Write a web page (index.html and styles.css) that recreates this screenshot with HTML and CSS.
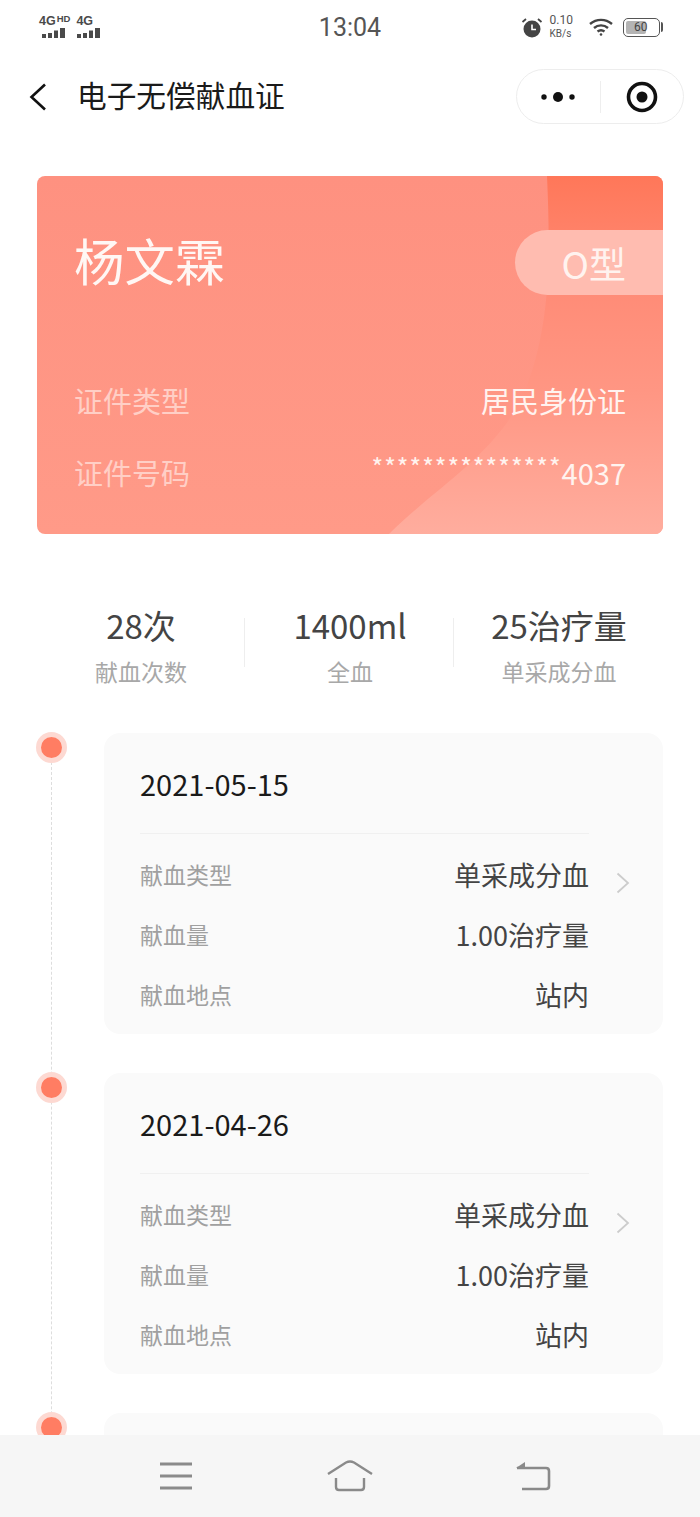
FILE: index.html
```html
<!DOCTYPE html>
<html lang="zh-CN">
  <head>
    <meta charset="UTF-8" />
    <meta name="viewport" content="width=device-width, initial-scale=1.0" />
    <title>电子无偿献血证</title>
    <link rel="stylesheet" href="styles.css">
  </head>
  <body>
    <div class="phone">
      <div class="status-bar">
        <div class="signals">
          <div class="signal">
            <span class="signal-text">4G<sup>HD</sup></span>
            <svg width="26" height="10" viewBox="0 0 26 10"><path d="M0 6h4v4H0zM6 5h4v5H6zM12 2.500h4v7.500h-4zM18 0h5v10h-5z" fill="#4a4a4a"/></svg>
          </div>
          <div class="signal signal-two">
            <span class="signal-text">4G</span>
            <svg width="24" height="10" viewBox="0 0 24 10"><path d="M0 6h4v4H0zM6 5h4v5H6zM12 2.500h4v7.500h-4zM18 0h5v10h-5z" fill="#4a4a4a"/></svg>
          </div>
        </div>
        <div class="clock">13:04</div>
        <div class="status-right">
          <svg class="alarm" width="22" height="21" viewBox="0 0 22 21">
            <circle cx="11" cy="12" r="8.500" fill="#444"/>
            <path d="M11 7.500v5h4" fill="none" stroke="#fff" stroke-width="1.600"/>
            <path d="M1.500 5l3.500-3M20.500 5l-3.500-3" stroke="#444" stroke-width="1.800"/>
          </svg>
          <div class="speed"><span>0.10</span><span class="speed-unit">KB/s</span></div>
          <svg class="wifi" width="24" height="18" viewBox="0 0 24 18" fill="none" stroke="#444" stroke-width="2.400">
            <path d="M1 6c6.500-5.500 15.500-5.500 22 0"/>
            <path d="M5 10c4-3.500 10-3.500 14 0"/>
            <path d="M8.500 13.500c2-1.500 5-1.500 7 0"/>
            <circle cx="12" cy="16.500" r="1.300" fill="#444" stroke="none"/>
          </svg>
          <div class="battery">
            <div class="battery-body"><div class="battery-fill"></div><span class="battery-num">60</span></div>
            <div class="battery-cap"></div>
          </div>
        </div>
      </div>

      <div class="nav-bar">
        <svg class="back" width="18" height="28" viewBox="0 0 18 28" fill="none" stroke="#111" stroke-width="2.600">
          <path d="M16 1.500L2.500 14 16 26.500"/>
        </svg>
        <div class="nav-title">电子无偿献血证</div>
        <div class="capsule">
          <div class="capsule-side">
            <svg width="34" height="12" viewBox="0 0 34 12" fill="#111"><circle cx="3" cy="6" r="2.700"/><circle cx="17" cy="6" r="5"/><circle cx="31" cy="6" r="2.700"/></svg>
          </div>
          <div class="capsule-line"></div>
          <div class="capsule-side">
            <svg width="32" height="32" viewBox="0 0 32 32"><circle cx="16" cy="16" r="13.500" fill="none" stroke="#111" stroke-width="3.600"/><circle cx="16" cy="16" r="5.500" fill="#111"/></svg>
          </div>
        </div>
      </div>

      <div class="content">
        <div class="id-card">
          <svg class="id-card-bg" width="626" height="358" viewBox="0 0 626 358">
            <defs>
              <linearGradient id="cardShade" x1="0" y1="0" x2="0" y2="1">
                <stop offset="0" stop-color="#ff7759"/>
                <stop offset="0.300" stop-color="#ff8b76"/>
                <stop offset="0.600" stop-color="#ff9683"/>
                <stop offset="1" stop-color="#ffad9e"/>
              </linearGradient>
            </defs>
            <path d="M510 0C514 90 512 150 490 210C465 275 400 310 352 358H626V0Z" fill="url(#cardShade)"/>
          </svg>
          <div class="card-top">
            <div class="card-name">杨文霖</div>
            <div class="blood-type">O型</div>
          </div>
          <div class="card-rows">
            <div class="card-row"><span class="card-label">证件类型</span><span>居民身份证</span></div>
            <div class="card-row"><span class="card-label">证件号码</span><span class="card-number"><span class="stars">***************</span>4037</span></div>
          </div>
        </div>

        <div class="stats">
          <div class="stat"><div class="stat-value">28次</div><div class="stat-label">献血次数</div></div>
          <div class="stat-line"></div>
          <div class="stat"><div class="stat-value">1400ml</div><div class="stat-label">全血</div></div>
          <div class="stat-line"></div>
          <div class="stat"><div class="stat-value">25治疗量</div><div class="stat-label">单采成分血</div></div>
        </div>

        <div class="timeline">
          <div class="record">
            <div class="dot"></div>
            <div class="record-card">
              <div class="record-date">2021-05-15</div>
              <div class="record-rows">
                <div class="record-row"><span class="record-label">献血类型</span><span>单采成分血</span></div>
                <div class="record-row"><span class="record-label">献血量</span><span>1.00治疗量</span></div>
                <div class="record-row"><span class="record-label">献血地点</span><span>站内</span></div>
                <svg class="arrow" width="14" height="22" viewBox="0 0 14 22" fill="none" stroke="#ccc" stroke-width="1.800"><path d="M1.500 1.500L12 11 1.500 20.500"/></svg>
              </div>
            </div>
          </div>
          <div class="record">
            <div class="dot"></div>
            <div class="record-card">
              <div class="record-date">2021-04-26</div>
              <div class="record-rows">
                <div class="record-row"><span class="record-label">献血类型</span><span>单采成分血</span></div>
                <div class="record-row"><span class="record-label">献血量</span><span>1.00治疗量</span></div>
                <div class="record-row"><span class="record-label">献血地点</span><span>站内</span></div>
                <svg class="arrow" width="14" height="22" viewBox="0 0 14 22" fill="none" stroke="#ccc" stroke-width="1.800"><path d="M1.500 1.500L12 11 1.500 20.500"/></svg>
              </div>
            </div>
          </div>
          <div class="record">
            <div class="dot"></div>
            <div class="record-card"></div>
          </div>
        </div>
      </div>

      <div class="bottom-bar">
        <svg width="34" height="28" viewBox="0 0 34 28" fill="none" stroke="#8a8a8a" stroke-width="2.800">
          <path d="M1 2h32M1 14h32M1 26h32"/>
        </svg>
        <svg class="home-icon" width="48" height="32" viewBox="0 0 48 32" fill="none" stroke="#8a8a8a" stroke-width="2.400">
          <path d="M2 14L20 2.500Q24 0.500 28 2.500L46 14"/>
          <path d="M10 18v9q0 3 3 3h22q3 0 3-3v-9"/>
        </svg>
        <svg width="36" height="30" viewBox="0 0 36 30" fill="none" stroke="#8a8a8a" stroke-width="2.600">
          <path d="M2 7h29q3 0 3 3v15q0 3-3 3H7"/>
          <path d="M1 7l9-6v6z" fill="#8a8a8a" stroke="none"/>
        </svg>
      </div>
    </div>
  </body>
</html>
```

FILE: styles.css
```css
* {
  box-sizing: border-box;
}

body {
  margin: 0;
  background: #fff;
  font-family: "Noto Sans CJK SC", "Noto Sans", sans-serif;
}

.phone {
  height: 1517px;
  display: flex;
  flex-direction: column;
  overflow: hidden;
}

/* status bar */
.status-bar {
  height: 62px;
  flex: none;
  padding: 15px 40px 0 39px;
  display: flex;
  justify-content: space-between;
  align-items: flex-start;
  position: relative;
}

.signals {
  display: flex;
  gap: 6px;
}

.signal {
  display: flex;
  flex-direction: column;
  gap: 1px;
  align-items: flex-start;
}

.signal svg {
  margin-left: 3px;
}

.signal-two svg {
  margin-left: 1px;
}

.signal-text {
  font-family: "Liberation Sans", sans-serif;
  font-size: 12.500px;
  line-height: 12px;
  font-weight: bold;
  color: #4a4a4a;
}

.signal-text sup {
  font-size: 9.500px;
  line-height: 8px;
  vertical-align: 3px;
  margin-left: 1px;
}

.clock {
  position: absolute;
  left: 0;
  right: 0;
  top: 13px;
  text-align: center;
  font-family: Roboto, sans-serif;
  font-size: 25px;
  line-height: 30px;
  color: #555;
}

.status-right {
  display: flex;
  align-items: center;
  height: 30px;
  margin: -3px -3px 0 0;
}

.speed {
  display: flex;
  flex-direction: column;
  margin-left: 7px;
  font-family: Roboto, sans-serif;
  font-size: 12px;
  line-height: 13px;
  color: #555;
}

.speed-unit {
  font-size: 10px;
}

.wifi {
  margin-left: 16px;
}

.battery {
  display: flex;
  align-items: center;
  margin-left: 10px;
}

.battery-body {
  width: 37px;
  height: 19px;
  border: 1.500px solid #555;
  border-radius: 5px;
  padding: 2px;
  position: relative;
}

.battery-fill {
  width: 20px;
  height: 100%;
  border-radius: 2px;
  background: #b4b4b4;
}

.battery-num {
  position: absolute;
  left: 10px;
  top: 0;
  font-family: Roboto, sans-serif;
  font-size: 12px;
  line-height: 16px;
  color: #444;
}

.battery-cap {
  width: 2px;
  height: 10px;
  margin-left: 1px;
  border-radius: 0 2px 2px 0;
  background: #555;
}

/* nav */
.nav-bar {
  height: 69px;
  flex: none;
  padding: 0 16px 0 29px;
  display: flex;
  align-items: center;
}

.nav-title {
  margin-left: 30px;
  padding-bottom: 3px;
  font-size: 29.700px;
  line-height: 40px;
  color: #1a1a1a;
  flex: 1;
}

.capsule {
  width: 168px;
  height: 55px;
  border: 1.500px solid #ededed;
  border-radius: 28px;
  display: flex;
  align-items: center;
}

.capsule-side {
  flex: 1;
  display: flex;
  justify-content: center;
  align-items: center;
}

.capsule-line {
  width: 1px;
  height: 32px;
  background: #eee;
}

/* content */
.content {
  flex: 1;
  min-height: 0;
  overflow: hidden;
  padding: 45px 37px 0;
}

.id-card {
  height: 358px;
  border-radius: 8px;
  background: linear-gradient(180deg, #fe9180 0%, #ff9a88 100%);
  position: relative;
  overflow: hidden;
  color: #fff;
  padding-left: 37px;
}

.id-card-bg {
  position: absolute;
  left: 0;
  top: 0;
}

.card-top {
  position: relative;
  height: 119px;
  padding-top: 54px;
  display: flex;
  justify-content: space-between;
  align-items: center;
}

.card-name {
  margin-bottom: 6px;
  font-size: 50.400px;
  line-height: 70px;
  color: #fff7f4;
}

.blood-type {
  width: 148px;
  height: 65px;
  border-radius: 33px 0 0 33px;
  background: #ffbcb0;
  padding-right: 37px;
  text-align: right;
  font-size: 37px;
  line-height: 66px;
  color: #fff3ef;
}

.card-rows {
  position: relative;
  padding: 85px 37px 0 0;
  display: flex;
  flex-direction: column;
  gap: 32px;
}

.card-row {
  display: flex;
  justify-content: space-between;
  font-size: 29px;
  line-height: 40px;
  color: #fff3ef;
}

.card-label {
  color: #ffcfc6;
}

.card-number {
  display: flex;
  align-items: flex-start;
}

.stars {
  font-size: 25px;
  line-height: 28px;
  letter-spacing: 1px;
}

/* stats */
.stats {
  margin-top: 68px;
  display: flex;
  align-items: center;
}

.stat {
  flex: 1;
  text-align: center;
}

.stat-line {
  width: 1px;
  height: 49px;
  margin: -4px 1px 0 -1px;
  background: #eee;
}

.stat-value {
  font-size: 33px;
  line-height: 46px;
  color: #444;
}

.stat-label {
  font-size: 23px;
  line-height: 32px;
  margin-top: 7px;
  color: #a8a8a8;
}

/* timeline */
.timeline {
  margin-top: 46px;
  display: flex;
  flex-direction: column;
  gap: 39px;
  position: relative;
}

.timeline::before {
  content: "";
  position: absolute;
  left: 14px;
  top: 14px;
  bottom: 0;
  border-left: 1.500px dashed #ddd;
}

.record {
  position: relative;
  padding-left: 67px;
}

.dot {
  position: absolute;
  left: -1.500px;
  top: -1px;
  width: 31px;
  height: 31px;
  border-radius: 50%;
  background: #ff7d63;
  border: 5px solid #fdd9d2;
}

.record-card {
  height: 301px;
  border-radius: 16px;
  background: #fafafa;
  padding: 0 74px 0 36px;
}

.record-date {
  height: 101px;
  border-bottom: 1.500px solid #f0f0f0;
  font-size: 29px;
  line-height: 100px;
  color: #1a1a1a;
}

.record-rows {
  position: relative;
  padding-top: 20px;
  display: flex;
  flex-direction: column;
  gap: 20px;
}

.record-row {
  display: flex;
  justify-content: space-between;
  align-items: center;
  height: 40px;
  font-size: 27px;
  color: #444;
}

.record-label {
  font-size: 23px;
  color: #a0a0a0;
}

.arrow {
  position: absolute;
  right: -41px;
  top: 38px;
}

/* bottom bar */
.bottom-bar {
  height: 82px;
  flex: none;
  background: #f6f6f6;
  padding: 0 149px 0 159px;
  display: flex;
  justify-content: space-between;
  align-items: center;
}

.home-icon {
  margin-right: 8px;
}
```
